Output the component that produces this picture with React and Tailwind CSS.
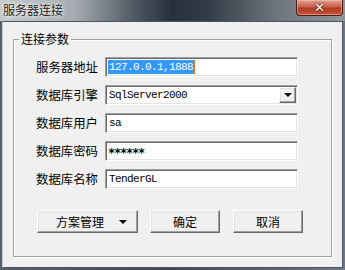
const cjk = "font-['Noto_Sans_CJK_SC','Microsoft_YaHei',sans-serif]";
const mono = "font-['Liberation_Mono','Noto_Sans_CJK_SC',monospace] text-[11px] tracking-[-0.6px]";

const sunken =
  'h-[20px] w-[193px] bg-white border border-t-[#a0a0a0] border-l-[#a0a0a0] border-r-[#ffffff] border-b-[#ffffff] shadow-[inset_1px_1px_0_#696969,inset_-1px_-1px_0_#e3e3e3] flex items-center';

const raised =
  'bg-[#f0f0f0] border border-t-[#ffffff] border-l-[#ffffff] border-r-[#696969] border-b-[#696969] shadow-[inset_-1px_-1px_0_#a0a0a0,inset_1px_1px_0_#e3e3e3]';

function Row({ label, children }) {
  return (
    <div className="flex items-center h-[20px]">
      <span className={`w-[69px] text-[12.4px] leading-none text-black ${cjk}`}>{label}</span>
      {children}
    </div>
  );
}

export default function App() {
  return (
    <div className="w-[345px] h-[270px] flex flex-col bg-[linear-gradient(90deg,#56606b_0%,#3e4853_50%,#6f7882_100%)] overflow-hidden">
      {/* title bar */}
      <div className="h-[21px] flex items-start justify-between bg-[linear-gradient(90deg,#c6cacd_0%,#a4aaaf_22%,#4a545e_40%,#27313b_50%,#323c46_60%,#6d757d_80%,#8e959b_100%)]">
        <span
          className={`ml-[3px] mt-[3px] text-[12px] leading-[14px] text-[#1c1c1c] [text-shadow:0_0_6px_#ffffff,0_0_3px_#ffffff] ${cjk}`}
        >
          服务器连接
        </span>
        <div className="mr-[2px] w-[47px] h-[16px] rounded-b-[4px] border border-t-0 border-[#4a1a14] bg-[linear-gradient(180deg,#e0a394_0%,#c8604a_45%,#b33a22_55%,#c2533a_100%)] shadow-[inset_0_0_0_1px_rgba(255,200,190,0.5)] flex items-center justify-center">
          <span className="text-white font-['DejaVu_Sans',sans-serif] font-bold text-[13px] leading-none [text-shadow:0_0_1px_#3b1208,0_0_2px_#3b1208]">
            ✕
          </span>
        </div>
      </div>

      {/* client area */}
      <div className="flex-1 mx-[2px] mb-[2px] bg-[#f0f0f0] border border-[#4a5561] border-l-[#c9ced4]">
        <fieldset className="ml-[10px] mt-[9px] w-[319px] h-[226px] border border-[#a0a0a0] shadow-[inset_1px_1px_0_#ffffff,1px_1px_0_#ffffff]">
          <legend className={`ml-[5px] px-[2px] text-[12px] leading-[16px] text-black ${cjk}`}>连接参数</legend>

          <div className="pl-[22px] pt-[10px] flex flex-col gap-[8px]">
            <Row label="服务器地址">
              <div className={sunken}>
                <span className={`ml-[2px] h-[14px] px-[1px] bg-[#3399ff] text-white leading-[14px] ${mono}`}>
                  127.0.0.1,1888
                </span>
                <span className="w-[1px] h-[14px] bg-[#e07a1c]" />
              </div>
            </Row>
            <Row label="数据库引擎">
              <div className={`${sunken} justify-between`}>
                <span className={`ml-[3px] text-black ${mono}`}>SqlServer2000</span>
                <div className={`mr-[1px] w-[17px] h-[16px] flex items-center justify-center ${raised}`}>
                  <div className="w-0 h-0 border-l-[4px] border-r-[4px] border-t-[4px] border-l-transparent border-r-transparent border-t-black" />
                </div>
              </div>
            </Row>
            <Row label="数据库用户">
              <div className={sunken}>
                <span className={`ml-[3px] text-black ${mono}`}>sa</span>
              </div>
            </Row>
            <Row label="数据库密码">
              <div className={sunken}>
                <span className="ml-[2px] mt-[3px] text-black font-['DejaVu_Sans_Mono',monospace] text-[12px] tracking-[-1.2px] font-bold">
                  ******
                </span>
              </div>
            </Row>
            <Row label="数据库名称">
              <div className={sunken}>
                <span className={`ml-[3px] text-black ${mono}`}>TenderGL</span>
              </div>
            </Row>
          </div>

          <div className={`pl-[23px] mt-[21px] flex gap-[12px] text-[12px] text-black ${cjk}`}>
            <div className={`w-[101px] h-[23px] flex items-center ${raised}`}>
              <span className="ml-[18px]">方案管理</span>
              <div className="ml-[15px] w-0 h-0 border-l-[4px] border-r-[4px] border-t-[4px] border-l-transparent border-r-transparent border-t-black" />
            </div>
            <div className={`w-[70px] h-[23px] flex items-center justify-center ${raised}`}>确定</div>
            <div className={`ml-[1px] w-[70px] h-[23px] flex items-center justify-center ${raised}`}>取消</div>
          </div>
        </fieldset>
      </div>
    </div>
  );
}
